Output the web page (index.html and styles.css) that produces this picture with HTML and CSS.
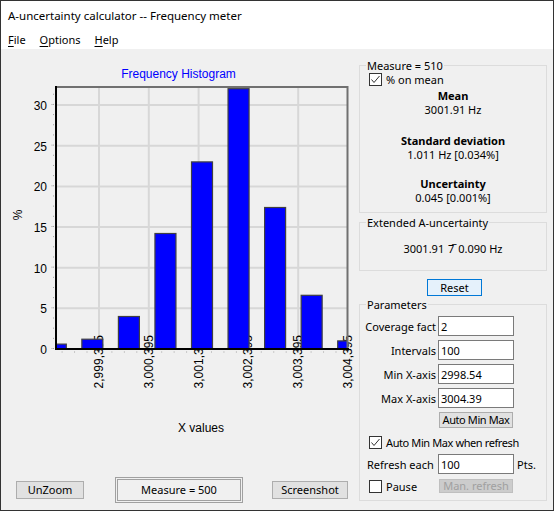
FILE: index.html
```html
<!DOCTYPE html>
<html lang="en">
<head>
    <meta charset="UTF-8">
    <title>A-uncertainty calculator -- Frequency meter</title>
    <link rel="stylesheet" href="styles.css">
</head>
<body>
<div class="window">
    <div class="titlebar">A-uncertainty calculator -- Frequency meter</div>
    <div class="menubar">
        <span class="menu"><u>F</u>ile</span>
        <span class="menu"><u>O</u>ptions</span>
        <span class="menu"><u>H</u>elp</span>
    </div>

    <div class="client">
        <div class="chart-pane">
            <!-- viewBox uses window coordinates so the numbers below are page pixels -->
            <svg class="chart" width="352" height="422" viewBox="1 49 352 422">
                <defs>
                    <clipPath id="plotClip"><rect x="56" y="80" width="292" height="270"/></clipPath>
                </defs>

                <text class="chart-title" x="178.5" y="78">Frequency Histogram</text>

                <!-- grid -->
                <g class="grid">
                    <line x1="57" y1="308.3" x2="347" y2="308.3"/>
                    <line x1="57" y1="267.7" x2="347" y2="267.7"/>
                    <line x1="57" y1="227" x2="347" y2="227"/>
                    <line x1="57" y1="186.4" x2="347" y2="186.4"/>
                    <line x1="57" y1="145.7" x2="347" y2="145.7"/>
                    <line x1="57" y1="105.1" x2="347" y2="105.1"/>
                    <line x1="99" y1="88" x2="99" y2="348"/>
                    <line x1="148.8" y1="88" x2="148.8" y2="348"/>
                    <line x1="198.6" y1="88" x2="198.6" y2="348"/>
                    <line x1="248.4" y1="88" x2="248.4" y2="348"/>
                    <line x1="298.2" y1="88" x2="298.2" y2="348"/>
                </g>

                <!-- ticks -->
                <line class="tick" x1="53.5" y1="349" x2="53.5" y2="87" stroke-dasharray="1 9.17"/>
                <line class="tick" x1="52" y1="349" x2="52" y2="87" stroke-dasharray="1 39.67" stroke-width="2"/>
                <line class="tick" x1="61.6" y1="352" x2="348" y2="352" stroke-dasharray="1 11.45" stroke-width="2"/>

                <!-- y labels -->
                <g class="ylabels">
                    <text x="47" y="354">0</text>
                    <text x="47" y="313.3">5</text>
                    <text x="47" y="272.7">10</text>
                    <text x="47" y="232">15</text>
                    <text x="47" y="191.4">20</text>
                    <text x="47" y="150.7">25</text>
                    <text x="47" y="110.1">30</text>
                </g>
                <text class="axis-name" transform="translate(22 215) rotate(-90)">%</text>

                <!-- x labels, drawn before the bars -->
                <g class="xlabels">
                    <text transform="translate(103 335) rotate(-90)">2,999,395</text>
                    <text transform="translate(152.8 335) rotate(-90)">3,000,395</text>
                    <text transform="translate(202.6 335) rotate(-90)">3,001,395</text>
                    <text transform="translate(252.4 335) rotate(-90)">3,002,395</text>
                    <text transform="translate(302.2 335) rotate(-90)">3,003,395</text>
                    <text transform="translate(351.5 335) rotate(-90)">3,004,395</text>
                </g>
                <text class="axis-name" x="201" y="432">X values</text>

                <!-- bars -->
                <g class="bars" clip-path="url(#plotClip)">
                    <rect x="45.3" y="344.1" width="21" height="4.9"/>
                    <rect x="81.85" y="339.2" width="21" height="9.8"/>
                    <rect x="118.4" y="316.5" width="21" height="32.5"/>
                    <rect x="154.95" y="233.5" width="21" height="115.5"/>
                    <rect x="191.5" y="161.9" width="21" height="187.1"/>
                    <rect x="228.05" y="88.7" width="21" height="260.3"/>
                    <rect x="264.6" y="207.5" width="21" height="141.5"/>
                    <rect x="301.15" y="295.3" width="21" height="53.7"/>
                    <rect x="337.7" y="340.9" width="21" height="8.1"/>
                </g>

                <!-- frame and axes -->
                <line class="frame" x1="55" y1="87" x2="348" y2="87"/>
                <line class="frame" x1="347.5" y1="86" x2="347.5" y2="349"/>
                <line class="axis" x1="56" y1="86" x2="56" y2="350"/>
                <line class="axis" x1="55" y1="349" x2="349" y2="349" stroke-width="3"/>
            </svg>

            <div class="chart-buttons">
                <button class="btn unzoom">UnZoom</button>
                <div class="measure-box">Measure = 500</div>
                <button class="btn screenshot">Screenshot</button>
            </div>
        </div>

        <div class="side">
            <fieldset class="group stats">
                <legend>Measure = 510</legend>
                <label class="check-row first">
                    <span class="check"><svg width="11" height="11" viewBox="0 0 11 11"><path d="M1.5 5.5 L4 8.5 L9.5 2"/></svg></span>
                    % on mean
                </label>
                <div class="stat">
                    <div class="stat-name">Mean</div>
                    <div>3001.91 Hz</div>
                </div>
                <div class="stat std">
                    <div class="stat-name">Standard deviation</div>
                    <div>1.011 Hz [0.034%]</div>
                </div>
                <div class="stat unc">
                    <div class="stat-name">Uncertainty</div>
                    <div>0.045 [0.001%]</div>
                </div>
            </fieldset>

            <fieldset class="group extended">
                <legend>Extended A-uncertainty</legend>
                <div class="ext-value">3001.91 <span class="pm">7&#773;</span> 0.090 Hz</div>
            </fieldset>

            <button class="btn reset">Reset</button>

            <fieldset class="group params">
                <legend>Parameters</legend>
                <div class="param-row first">
                    <span class="param-label">Coverage fact</span>
                    <input class="field" type="text" value="2">
                </div>
                <div class="param-row">
                    <span class="param-label">Intervals</span>
                    <input class="field" type="text" value="100">
                </div>
                <div class="param-row">
                    <span class="param-label">Min X-axis</span>
                    <input class="field" type="text" value="2998.54">
                </div>
                <div class="param-row">
                    <span class="param-label">Max X-axis</span>
                    <input class="field" type="text" value="3004.39">
                </div>
                <button class="btn automm">Auto Min Max</button>
                <label class="check-row auto">
                    <span class="check"><svg width="11" height="11" viewBox="0 0 11 11"><path d="M1.5 5.5 L4 8.5 L9.5 2"/></svg></span>
                    Auto Min Max when refresh
                </label>
                <div class="param-row refresh">
                    <span class="param-label left">Refresh each</span>
                    <input class="field" type="text" value="100">
                    <span class="unit">Pts.</span>
                </div>
                <div class="pause-row">
                    <label class="check-row"><span class="check"></span>Pause</label>
                    <button class="btn manual" disabled>Man. refresh</button>
                </div>
            </fieldset>
        </div>
    </div>
</div>
</body>
</html>
```

FILE: styles.css
```css
body {
    margin: 0;
    font-family: "Noto Sans", sans-serif;
    font-size: 11px;
    color: #000;
}

.window {
    width: 552px;
    height: 509px;
    border: 1px solid #333;
    background: #f0f0f0;
    display: flex;
    flex-direction: column;
}

.titlebar {
    height: 29px;
    line-height: 30px;
    padding-left: 7px;
    background: #fff;
    font-size: 11.5px;
}
.menubar {
    height: 19px;
    line-height: 20px;
    background: #fff;
    display: flex;
}
.menu {
    padding: 0 7px;
}
.menu u { text-decoration-thickness: 1px; text-underline-offset: 2px; }

.client {
    flex: 1;
    display: flex;
}

/* chart */
.chart-pane {
    width: 352px;
    display: flex;
    flex-direction: column;
}
.chart { display: block; overflow: visible; font-family: "Liberation Sans", Arial, sans-serif; }
.chart-title { fill: #0000ff; font-size: 12px; text-anchor: middle; }
.grid line { stroke: #d7d7d7; stroke-width: 2; }
.tick { stroke: #a0a0a0; stroke-width: 1; }
.ylabels text { font-size: 12px; text-anchor: end; fill: #000; }
.xlabels text { font-size: 12px; text-anchor: end; fill: #000; }
.axis-name { font-size: 12px; text-anchor: middle; }
.bars rect { fill: #0000ff; stroke: #404040; stroke-width: 1.2; }
.frame { stroke: #707070; stroke-width: 2; }
.axis { stroke: #000; stroke-width: 2; }

.chart-buttons {
    flex: 1;
    display: flex;
    align-items: center;
    padding-bottom: 1px;
}

.btn {
    font-family: "Noto Sans", sans-serif;
    font-size: 11px;
    color: #000;
    background: #e1e1e1;
    border: 1px solid #adadad;
    padding: 0;
    box-sizing: border-box;
    line-height: 14px;
}
.unzoom { margin-left: 15px; width: 68px; height: 18px; }
.measure-box {
    margin-left: 31px;
    width: 128px;
    height: 26px;
    box-sizing: border-box;
    border: 3px double #a0a0a0;
    line-height: 20px;
    text-align: center;
}
.screenshot { margin-left: 29px; width: 76px; height: 18px; }

/* right side */
.side {
    width: 200px;
    box-sizing: border-box;
    padding: 10px 0 0 6px;
    display: flex;
    flex-direction: column;
    align-items: flex-start;
}
.group {
    margin: 0;
    padding: 0;
    width: 188px;
    box-sizing: border-box;
    border: 1px solid #dcdcdc;
    min-width: 0;
}
.group legend {
    margin-left: 6px;
    padding: 0 1px;
    line-height: 13px;
}

.check-row {
    display: flex;
    align-items: center;
    height: 13px;
    padding-left: 9px;
}
.check {
    width: 13px;
    height: 13px;
    box-sizing: border-box;
    border: 1px solid #333;
    background: #fff;
    margin-right: 4px;
}
.check svg { display: block; }
.check path { fill: none; stroke: #333; stroke-width: 1; }

.stats { height: 154px; }
.stats .first { margin-top: 1px; }
.stat {
    text-align: center;
    line-height: 14px;
    margin-top: 3px;
}
.stat-name { font-weight: bold; }
.stat.std { margin-top: 17px; }
.stat.unc { margin-top: 15px; }

.extended { margin-top: 3px; height: 55px; }
.ext-value {
    margin-top: 13px;
    line-height: 14px;
    text-align: center;
}
.pm { margin: 0 1px; }

.reset {
    margin: 8px 0 0 68px;
    width: 55px;
    height: 17px;
    background: #e5f1fb;
    border-color: #0078d7;
}

.params { margin-top: 2px; height: 203px; }
.param-row {
    display: flex;
    align-items: center;
    height: 20px;
    margin-top: 4px;
}
.param-row.first { margin-top: 5px; }
.param-label {
    width: 76px;
    text-align: right;
    margin-right: 2px;
}
.param-label.left { text-align: left; padding-left: 7px; width: 69px; }
.field {
    width: 76px;
    height: 20px;
    box-sizing: border-box;
    border: 1px solid #7a7a7a;
    background: #fff;
    padding: 0 2px;
    font-family: "Noto Sans", sans-serif;
    font-size: 11px;
    outline: none;
}
.unit { margin-left: 3px; }
.automm { margin: 4px 0 0 79px; width: 74px; height: 16px; letter-spacing: -0.4px; }
.check-row.auto { margin-top: 8px; letter-spacing: -0.4px; }
.refresh { margin-top: 5px; }
.pause-row {
    display: flex;
    align-items: center;
    margin-top: 5px;
    height: 14px;
}
.pause-row .check-row { width: 70px; }
.manual {
    width: 74px;
    height: 14px;
    background: #cccccc;
    border-color: #bfbfbf;
    color: #a0a0a0;
    line-height: 12px;
}
```
